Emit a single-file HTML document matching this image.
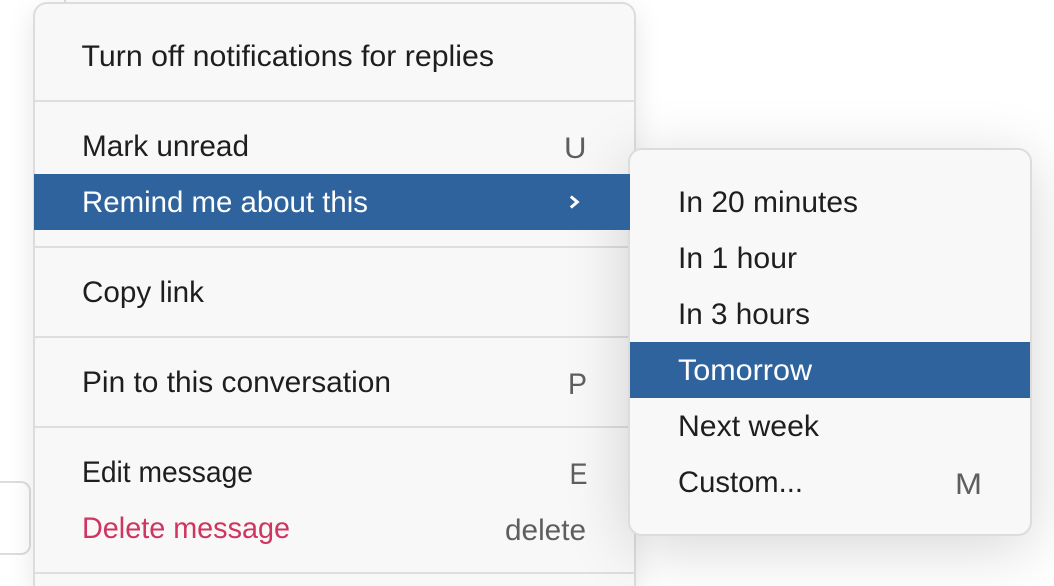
<!DOCTYPE html>
<html>
<head>
<meta charset="utf-8">
<style>
html,body{margin:0;padding:0;background:#fff;width:1054px;height:586px;overflow:hidden}
.abs{position:absolute;box-sizing:border-box}
#stage{position:relative;width:1054px;height:586px;overflow:hidden;background:#fff}
svg{position:absolute;left:0;top:0}
text{font-family:"Liberation Sans",sans-serif;font-size:30px}
.d{fill:#1e1e1e}.w{fill:#fff}.k{fill:#5e5e5e}.r{fill:#cf3560}
</style>
</head>
<body>
<div id="stage">
<div class="abs" style="left:64px;top:0;width:2px;height:4px;background:#ddd"></div>
<div class="abs" style="left:0;top:481px;width:31px;height:74px;background:#fff;border:2px solid #ddd;border-left:none;border-radius:0 10px 10px 0"></div>
<div class="abs" style="left:33px;top:2px;width:603px;height:584px;background:#f8f8f8;border:2px solid #dcdcdc;border-bottom:none;border-radius:14px 14px 0 0;box-shadow:0 8px 28px rgba(0,0,0,.1)"></div>
<div class="abs" style="left:35px;top:100px;width:599px;height:2px;background:#dedede"></div>
<div class="abs" style="left:35px;top:246px;width:599px;height:2px;background:#dedede"></div>
<div class="abs" style="left:35px;top:336px;width:599px;height:2px;background:#dedede"></div>
<div class="abs" style="left:35px;top:426px;width:599px;height:2px;background:#dedede"></div>
<div class="abs" style="left:35px;top:572px;width:599px;height:2px;background:#dedede"></div>
<div class="abs" style="left:628px;top:148px;width:404px;height:388px;background:#f8f8f8;border:2px solid #dcdcdc;border-radius:14px;box-shadow:0 12px 64px rgba(0,0,0,.16)"></div>
<div class="abs" style="left:34px;top:174px;width:596px;height:56px;background:#2f639d"></div>
<div class="abs" style="left:630px;top:342px;width:400px;height:56px;background:#2f639d"></div>
<svg width="1054" height="586" viewBox="0 0 1054 586">
<text class="d" x="81.5" y="66" textLength="412.5" lengthAdjust="spacingAndGlyphs">Turn off notifications for replies</text>
<text class="d" x="82" y="156" textLength="167" lengthAdjust="spacingAndGlyphs">Mark unread</text>
<text class="w" x="82" y="212" textLength="286" lengthAdjust="spacingAndGlyphs">Remind me about this</text>
<text class="d" x="82" y="302" textLength="122" lengthAdjust="spacingAndGlyphs">Copy link</text>
<text class="d" x="82" y="392" textLength="309" lengthAdjust="spacingAndGlyphs">Pin to this conversation</text>
<text class="d" x="82" y="482" textLength="171" lengthAdjust="spacingAndGlyphs">Edit message</text>
<text class="r" x="82" y="538" textLength="208" lengthAdjust="spacingAndGlyphs">Delete message</text>
<text class="k" x="564" y="158" textLength="22.5" lengthAdjust="spacingAndGlyphs">U</text>
<text class="k" x="568" y="394" textLength="19" lengthAdjust="spacingAndGlyphs">P</text>
<text class="k" x="569.5" y="484" textLength="18" lengthAdjust="spacingAndGlyphs">E</text>
<text class="k" x="505" y="540" textLength="81" lengthAdjust="spacingAndGlyphs">delete</text>
<path d="M570.8 196.5 L577.3 202 L570.8 207.5" fill="none" stroke="#fff" stroke-width="3"/>
<text class="d" x="678" y="212" textLength="180" lengthAdjust="spacingAndGlyphs">In 20 minutes</text>
<text class="d" x="678" y="268" textLength="119" lengthAdjust="spacingAndGlyphs">In 1 hour</text>
<text class="d" x="678" y="324" textLength="132" lengthAdjust="spacingAndGlyphs">In 3 hours</text>
<text class="w" x="678" y="380" textLength="134" lengthAdjust="spacingAndGlyphs">Tomorrow</text>
<text class="d" x="678" y="436" textLength="141" lengthAdjust="spacingAndGlyphs">Next week</text>
<text class="d" x="678" y="492" textLength="125" lengthAdjust="spacingAndGlyphs">Custom...</text>
<text class="k" x="955" y="494" textLength="27" lengthAdjust="spacingAndGlyphs">M</text>
</svg>
</div>
</body>
</html>
